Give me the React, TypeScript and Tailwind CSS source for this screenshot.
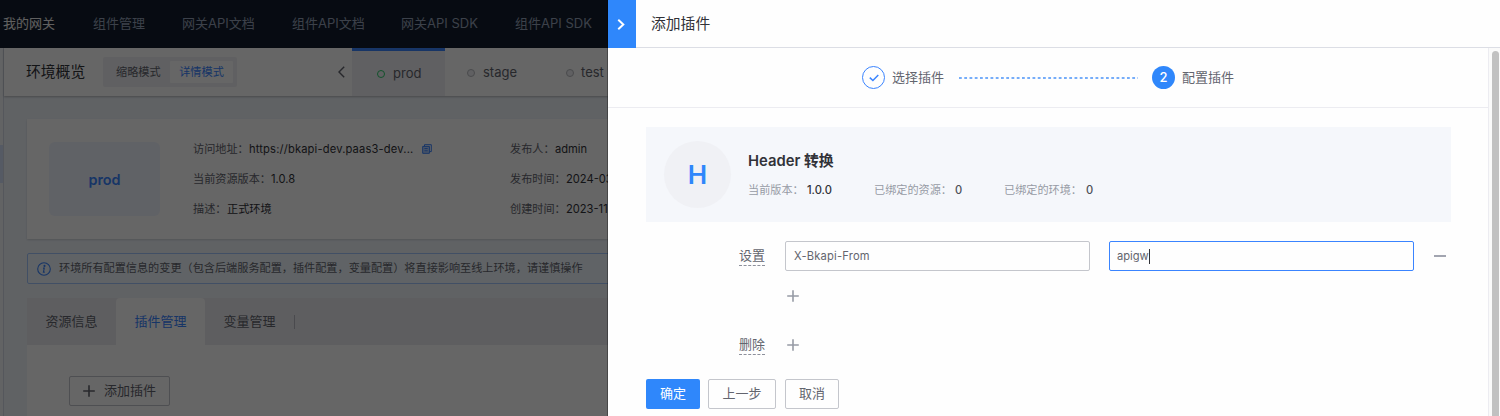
import React from 'react';

const navItems = [
  { label: '我的网关', width: 'w-[90px]', color: 'text-[#f0f0f0]' },
  { label: '组件管理', width: 'w-[89px]', color: 'text-[#96a2b9]' },
  { label: '网关API文档', width: 'w-[110px]', color: 'text-[#96a2b9]' },
  { label: '组件API文档', width: 'w-[109px]', color: 'text-[#96a2b9]' },
  { label: '网关API SDK', width: 'w-[114px]', color: 'text-[#96a2b9]' },
  { label: '组件API SDK', width: 'w-[90px]', color: 'text-[#96a2b9]' },
];

function PlusIcon({ className }: { className: string }) {
  return (
    <svg viewBox="0 0 12 12" className={className} fill="none" stroke="currentColor" strokeWidth="1.6">
      <path d="M6 0.2V11.8M0.2 6H11.8" />
    </svg>
  );
}

function Field({ label, value, labelWidth }: { label: string; value: string; labelWidth: string }) {
  return (
    <div className="flex h-[30px] items-center">
      <span className={`${labelWidth} shrink-0 text-[#63656e]`}>{label}</span>
      <span className="text-[#313238]">{value}</span>
    </div>
  );
}

function GatewayPage() {
  return (
    <div className="relative flex h-full w-[608px] shrink-0 flex-col overflow-hidden bg-[#f0f5fb] whitespace-nowrap">
      <nav className="flex h-12 shrink-0 items-center bg-[#131d2d] pl-[3px] text-[13px]">
        {navItems.map((item) => (
          <span key={item.label} className={`${item.width} ${item.color} shrink-0`}>
            {item.label}
          </span>
        ))}
      </nav>

      <div className="flex min-h-0 flex-1">
        <aside className="w-1 shrink-0 border-r border-[#d4dae5] bg-[#f5f7fa] pt-[97px]">
          <div className="h-[38px] bg-[#d5e2fa]" />
        </aside>

        <main className="flex min-w-0 flex-1 flex-col">
          <header className="flex h-12 shrink-0 bg-[#fefefe] shadow-[0_1px_2px_rgba(0,0,0,0.25)]">
            <div className="flex w-[348px] shrink-0 items-center pl-[22px]">
              <h1 className="w-[77px] text-[14.8px] text-[#313238]">环境概览</h1>
              <div className="flex h-[30px] w-[134px] items-center rounded-[2px] bg-[#f0f1f5] pl-[3px] text-[11.15px]">
                <span className="w-16 pl-[10px] text-[#63656e]">缩略模式</span>
                <span className="flex h-[22px] w-[63px] items-center justify-center rounded-[1px] bg-white text-[#3a84ff]">
                  详情模式
                </span>
              </div>
              <svg viewBox="0 0 7 12" className="ml-[101px] h-3 w-[7px]" fill="none" stroke="#63656e" strokeWidth="1.4">
                <path d="M6.2 0.8L1 6L6.2 11.2" />
              </svg>
            </div>
            <div className="flex w-[93px] shrink-0 items-center border-t-[3px] border-[#3a84ff] bg-[#f0f1f5] pl-[25px] text-[13px] text-[#63656e]">
              <span className="mr-[8px] size-2 rounded-full border border-[#2dcb6d]" />
              prod
            </div>
            <div className="flex w-[99px] shrink-0 items-center pt-px pl-[22px] text-[13px] text-[#63656e]">
              <span className="mr-[8px] size-2 rounded-full border border-[#b8babf] bg-[#f0f1f5]" />
              stage
            </div>
            <div className="flex items-center pt-px pl-[22px] text-[13px] text-[#63656e]">
              <span className="mr-[7px] size-2 rounded-full border border-[#b8babf] bg-[#f0f1f5]" />
              test
            </div>
          </header>

          <div className="flex min-h-0 flex-1 flex-col pt-[23px] pl-[23px] text-[11.15px]">
            <section className="flex h-[120px] shrink-0 bg-[#fefefe] pt-[23px] pl-[22px] shadow-[0_1px_2px_rgba(0,0,0,0.15)]">
              <div className="flex h-[74px] w-[111px] shrink-0 items-center justify-center rounded-[6px] bg-[#f0f5ff] pt-px text-[14.4px] font-semibold text-[#3a84ff]">
                prod
              </div>
              <div className="-mt-2 ml-[33px] w-[317px] shrink-0">
                <div className="flex h-[30px] items-center">
                  <span className="w-14 text-[#63656e]">访问地址：</span>
                  <span className="w-[173px] tracking-[0.17px] text-[#313238]">https://bkapi-dev.paas3-dev...</span>
                  <svg viewBox="0 0 10 10" className="size-[10px]" fill="none" stroke="#3a84ff" strokeWidth="1">
                    <path d="M2.5 2.2V0.7H9.3V7.6H7.6" />
                    <path d="M0.7 2.4H7.4V9.3H0.7Z" fill="#3a84ff" fillOpacity="0.35" />
                    <path d="M2.4 4.6H5.7M2.4 6.8H5.7" />
                  </svg>
                </div>
                <Field label="当前资源版本：" value="1.0.8" labelWidth="w-[78px]" />
                <Field label="描述：" value="正式环境" labelWidth="w-[34px]" />
              </div>
              <div className="-mt-2 shrink-0">
                <Field label="发布人：" value="admin" labelWidth="w-[45px]" />
                <Field label="发布时间：" value="2024-03" labelWidth="w-14" />
                <Field label="创建时间：" value="2023-11" labelWidth="w-14" />
              </div>
            </section>

            <div className="mt-[14px] flex h-[31px] w-[700px] shrink-0 items-center rounded-[2px] border border-[#a3c5fd] bg-[#f0f8ff] pl-[9px] text-[#63656e]">
              <svg viewBox="0 0 14 14" className="mr-2 size-[14px]" fill="none" stroke="#3a84ff" strokeWidth="1.1">
                <circle cx="7" cy="7" r="6.3" />
                <path d="M6 6.1H7.3L6.4 10.1H7.8" />
                <circle cx="7.5" cy="3.9" r="0.5" fill="#3a84ff" />
              </svg>
              环境所有配置信息的变更（包含后端服务配置，插件配置，变量配置）将直接影响至线上环境，请谨慎操作
            </div>

            <div className="mt-[14px] flex h-[47px] shrink-0 items-center bg-[#eaebf0] text-[13px] text-[#63656e]">
              <span className="flex h-full w-[89px] items-center justify-center">资源信息</span>
              <span className="flex h-full w-[89px] items-center justify-center rounded-t-[4px] bg-[#fefefe] text-[#3a84ff]">
                插件管理
              </span>
              <span className="flex h-[14px] w-[90px] items-center justify-center border-r border-[#b8bac2]">变量管理</span>
            </div>

            <div className="flex-1 bg-[#fefefe] pt-[31px] pl-[42px]">
              <button className="flex h-[30px] w-[101px] items-center rounded-[2px] border border-[#c4c6cc] pl-[13px] text-[13px] text-[#63656e]">
                <PlusIcon className="mr-[9px] size-3" />
                添加插件
              </button>
            </div>
          </div>
        </main>
      </div>

      <div className="absolute inset-0 border-r border-black/30 bg-black/60" />
    </div>
  );
}

function Drawer() {
  return (
    <section className="flex h-full min-w-0 flex-1 flex-col bg-[#fefefe] whitespace-nowrap">
      <header className="flex h-12 shrink-0 items-stretch">
        <button className="flex w-7 items-center justify-center bg-[#2f87fb]">
          <svg viewBox="0 0 7 10" className="ml-[-3px] h-[11px] w-2" fill="none" stroke="white" strokeWidth="1.8">
            <path d="M1 0.7L5.6 5L1 9.3" />
          </svg>
        </button>
        <h2 className="flex flex-1 items-center border-b border-[#dcdee5] pt-px pl-[15px] text-[14.8px] text-[#313238]">
          添加插件
        </h2>
      </header>

      <div className="flex min-h-0 flex-1">
        <div className="flex min-w-0 flex-1 flex-col">
          <div className="flex h-[60px] shrink-0 items-center border-b-[1.5px] border-[#ececf1] pl-[254px] text-[13px] text-[#63656e]">
            <span className="flex size-[23px] items-center justify-center rounded-full border border-[#3a84ff]">
              <svg viewBox="0 0 10 8" className="h-2 w-[10px]" fill="none" stroke="#3a84ff" strokeWidth="1.5">
                <path d="M0.8 3.6L3.9 6.5L9.3 1" />
              </svg>
            </span>
            <span className="ml-[7px] w-[67px]">选择插件</span>
            <svg className="mt-px h-[2px] w-[179px]" viewBox="0 0 179 2">
              <path d="M0 1H179" stroke="#4a93f8" strokeWidth="1.4" strokeDasharray="2.8 2.45" />
            </svg>
            <span className="ml-[14px] flex size-[23px] items-center justify-center rounded-full bg-[#2f87fb] text-[13px] font-medium text-white">
              2
            </span>
            <span className="ml-[7px]">配置插件</span>
          </div>

          <div className="flex min-h-0 flex-1 flex-col pt-[19px] pl-[38px]">
            <div className="flex h-[95px] w-[805px] shrink-0 items-center bg-[#f5f7fb] pl-[18px]">
              <div className="flex size-[67px] shrink-0 items-center justify-center rounded-full bg-[#f0f1f5] text-[26px] font-semibold text-[#2f87fb]">
                H
              </div>
              <div className="mt-[3px] ml-[17px] text-[11.15px] text-[#979ba5]">
                <h3 className="flex h-[28px] items-center text-[14.8px] font-semibold text-[#313238]">Header 转换</h3>
                <div className="flex h-[29px] items-center">
                  <span className="w-[59px]">当前版本：</span>
                  <span className="w-[67px] font-medium text-[#313238]">1.0.0</span>
                  <span className="w-[81px]">已绑定的资源：</span>
                  <span className="w-[49px] font-medium text-[#4d4f56]">0</span>
                  <span className="w-[82px]">已绑定的环境：</span>
                  <span className="font-medium text-[#4d4f56]">0</span>
                </div>
              </div>
            </div>

            <div className="mt-[18px] flex h-[31px] shrink-0 items-center">
              <span className="ml-[93px] w-[46px] text-[13px] text-[#63656e]">
                <span className="inline-block h-5 border-b border-dashed border-[#8d909b] leading-[19px]">设置</span>
              </span>
              <div className="flex h-[30px] w-[305px] items-center rounded-[2px] border border-[#c4c6cc] pt-px pl-[8px] text-[11.15px] tracking-[0.2px] text-[#63656e]">
                X-Bkapi-From
              </div>
              <div className="ml-[19px] flex h-[30px] w-[305px] items-center rounded-[2px] border border-[#3a84ff] pt-px pl-[7px] text-[11.15px] text-[#63656e]">
                apigw
                <span className="h-[15px] w-px bg-[#313238]" />
              </div>
              <span className="ml-5 h-[2px] w-3 bg-[#a2a5b0]" />
            </div>

            <div className="mt-[19px] ml-[141px] shrink-0 text-[#979ba5]">
              <PlusIcon className="size-3" />
            </div>

            <div className="mt-[32px] flex h-[21px] shrink-0 items-center">
              <span className="ml-[93px] w-[48px] text-[13px] text-[#63656e]">
                <span className="inline-block h-5 border-b border-dashed border-[#8d909b] leading-[19px]">删除</span>
              </span>
              <PlusIcon className="size-3 text-[#979ba5]" />
            </div>

            <div className="mt-[24px] flex h-[30px] shrink-0 text-[13px] text-[#63656e]">
              <button className="w-[54px] rounded-[2px] bg-[#2f87fb] text-white">确定</button>
              <button className="ml-2 w-[68px] rounded-[2px] border border-[#c4c6cc]">上一步</button>
              <button className="ml-[9px] w-[54px] rounded-[2px] border border-[#c4c6cc]">取消</button>
            </div>
          </div>
        </div>

        <div className="w-3 shrink-0 border-l border-[#ececf1] bg-[#fafafa] pt-[3px] pl-[3px]">
          <div className="h-full w-[7px] rounded-t-full bg-[#c1c1c1]" />
        </div>
      </div>
    </section>
  );
}

export default function App() {
  return (
    <div
      lang="zh-CN"
      className="flex h-[416px] w-[1500px] overflow-hidden font-[Inter,'Noto_Sans_CJK_SC',sans-serif]"
    >
      <GatewayPage />
      <Drawer />
    </div>
  );
}
